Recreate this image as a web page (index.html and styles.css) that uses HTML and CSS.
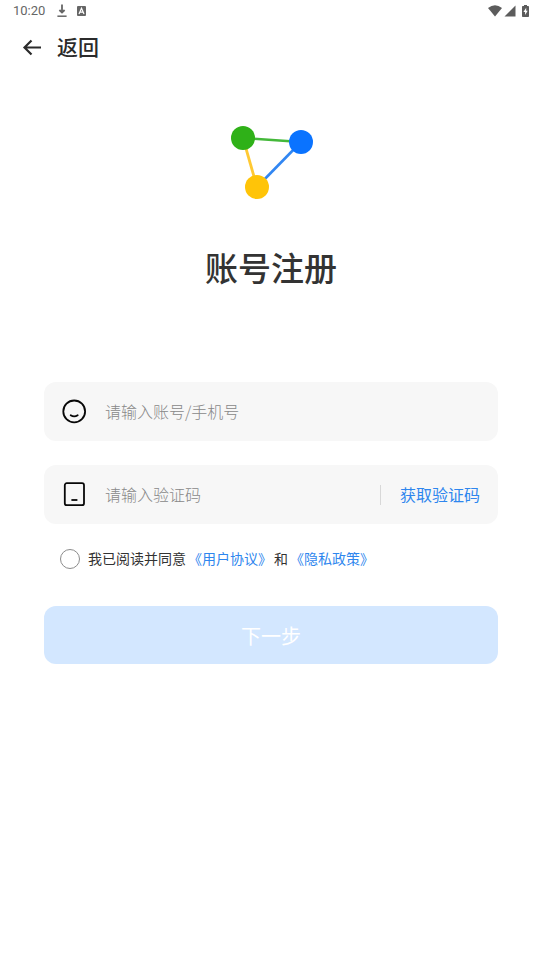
FILE: index.html
```html
<!DOCTYPE html>
<html lang="zh-CN">
<head>
<meta charset="utf-8">
<meta name="viewport" content="width=device-width, initial-scale=1">
<title>账号注册</title>
<link rel="stylesheet" href="styles.css">
</head>
<body>
<div class="status">
  <span class="time">10:20</span>
  <svg class="download" width="10" height="14" viewBox="0 0 10 14" aria-hidden="true"><path d="M5 0.5V8M2.4 6L5 8.6L7.6 6" fill="none" stroke="#666" stroke-width="1.8"/><path d="M0.4 12.2H9.6" stroke="#666" stroke-width="1.5"/></svg>
  <svg width="9" height="10" viewBox="0 0 9 10" aria-hidden="true"><rect width="9" height="10" rx="1" fill="#666"/><path d="M2 8L4.5 2.2L7 8M3 6.2H6" fill="none" stroke="#fff" stroke-width="1.2"/></svg>
  <span class="system">
    <svg width="14" height="12" viewBox="0 0 14 12" aria-hidden="true"><path d="M0 3Q7-2.4 14 3L7 11.6Z" fill="#5c5c5c"/></svg>
    <svg width="12" height="12" viewBox="0 0 12 12" aria-hidden="true"><path d="M11.5 0.5V11.5H0.5Z" fill="#5c5c5c"/></svg>
    <svg class="battery" width="7" height="12" viewBox="0 0 7 12" aria-hidden="true"><path d="M2 0H5V1H6.2Q7 1 7 1.8V11.2Q7 12 6.2 12H0.8Q0 12 0 11.2V1.8Q0 1 0.8 1H2Z" fill="#5c5c5c"/><path d="M4.2 2.8L1.4 7H3.1V10L5.7 5.8H4.2Z" fill="#fff"/></svg>
  </span>
</div>
<header class="topbar">
  <button class="back" type="button">
    <svg width="20" height="20" viewBox="0 0 20 20" aria-hidden="true"><path d="M19 11.5H2.5M9.5 4.5L2.5 11.5L9.5 18.5" fill="none" stroke="#2b2b2b" stroke-width="2.2"/></svg>
    <span>返回</span>
  </button>
</header>
<main class="page">
  <svg class="logo" width="86" height="78" viewBox="0 0 86 78" aria-hidden="true">
    <path d="M15 15L73 19" stroke="#44b83a" stroke-width="2.6"/>
    <path d="M15 15L29 64" stroke="#ffc933" stroke-width="2.8"/>
    <path d="M73 19L29 64" stroke="#3186f2" stroke-width="2.6"/>
    <circle cx="15" cy="15" r="12" fill="#2fb118"/>
    <circle cx="73" cy="19" r="12" fill="#0a73ff"/>
    <circle cx="29" cy="64" r="12" fill="#ffc408"/>
  </svg>
  <h1>账号注册</h1>
  <form>
    <div class="field">
      <label for="account" aria-label="账号/手机号"><svg width="26" height="26" viewBox="0 0 26 26" aria-hidden="true"><g fill="none" stroke="#080808" stroke-width="1.8"><circle cx="13.2" cy="12.4" r="10.9"/><path d="M9.7 16.2Q13.2 18.6 16.7 16.2" stroke-linecap="round"/></g></svg></label>
      <input id="account" type="text" placeholder="请输入账号/手机号">
    </div>
    <div class="field">
      <label for="code" aria-label="验证码"><svg width="26" height="26" viewBox="0 0 26 26" aria-hidden="true"><g fill="none" stroke="#080808" stroke-width="1.8"><rect x="3.8" y="1.2" width="19.2" height="22" rx="2"/><path d="M10.4 18H16.4"/></g></svg></label>
      <input id="code" type="text" placeholder="请输入验证码">
      <button class="send" type="button">获取验证码</button>
    </div>
    <div class="agreement">
      <input id="agree" type="checkbox">
      <label for="agree">我已阅读并同意<a href="#terms">《用户协议》</a>和<a href="#privacy">《隐私政策》</a></label>
    </div>
    <button class="next" type="submit">下一步</button>
  </form>
</main>
</body>
</html>
```
FILE: styles.css
```css
* {
  box-sizing: border-box;
}

body {
  margin: 0;
  background: #fff;
  color: #333;
  font-family: "Noto Sans CJK SC", sans-serif;
}

svg {
  display: block;
}

button,
input {
  margin: 0;
  padding: 0;
  border: 0;
  background: none;
  font-family: inherit;
}

.status {
  display: flex;
  align-items: center;
  height: 22px;
  padding: 0 13px;
}

.time {
  color: #666;
  font: 13px/22px Roboto, sans-serif;
}

.download {
  margin: 0 10px 0 12px;
}

.system {
  display: flex;
  align-items: center;
  gap: 2px;
  margin-left: auto;
}

.battery {
  margin-left: 4px;
}

.topbar {
  display: flex;
  height: 48px;
  padding: 0 22px;
}

.back {
  display: flex;
  align-items: center;
  gap: 15px;
  color: #2b2b2b;
  font-size: 21px;
  font-weight: 500;
}

.page {
  padding: 53px 44px;
}

.logo {
  margin: 0 auto;
}

h1 {
  margin: 40px 0 89px;
  font-size: 33px;
  font-weight: 500;
  line-height: 52px;
  text-align: center;
}

.field {
  display: flex;
  align-items: center;
  height: 59px;
  margin-bottom: 24px;
  padding: 0 18px 0 17px;
  border-radius: 12px;
  background: #f7f7f7;
}

.field input {
  flex: 1;
  min-width: 0;
  height: 100%;
  margin-left: 18px;
  padding-bottom: 2px;
  outline: 0;
  color: #333;
  font-size: 16px;
}

.field input::placeholder {
  color: #888;
  font-weight: 300;
  opacity: 1;
}

.send {
  padding: 0 0 2px 19px;
  border-left: 1px solid #d8d8d8;
  color: #2e86ee;
  font-size: 16px;
  line-height: 18px;
}

.agreement {
  display: flex;
  align-items: center;
  gap: 8px;
  height: 22px;
  padding-left: 16px;
  font-size: 14px;
}

.agreement label {
  padding-bottom: 2px;
}

.agreement input {
  width: 20px;
  height: 20px;
  appearance: none;
  border: 1px solid #8c8c8c;
  border-radius: 50%;
}

.agreement input:checked {
  border: 6px solid #2e86ee;
}

.agreement a {
  margin: 0 2px;
  color: #2e86ee;
  text-decoration: none;
}

.next {
  width: 100%;
  height: 58px;
  margin-top: 36px;
  border-radius: 12px;
  background: #d3e7ff;
  color: #fff;
  font-size: 20px;
}
```
